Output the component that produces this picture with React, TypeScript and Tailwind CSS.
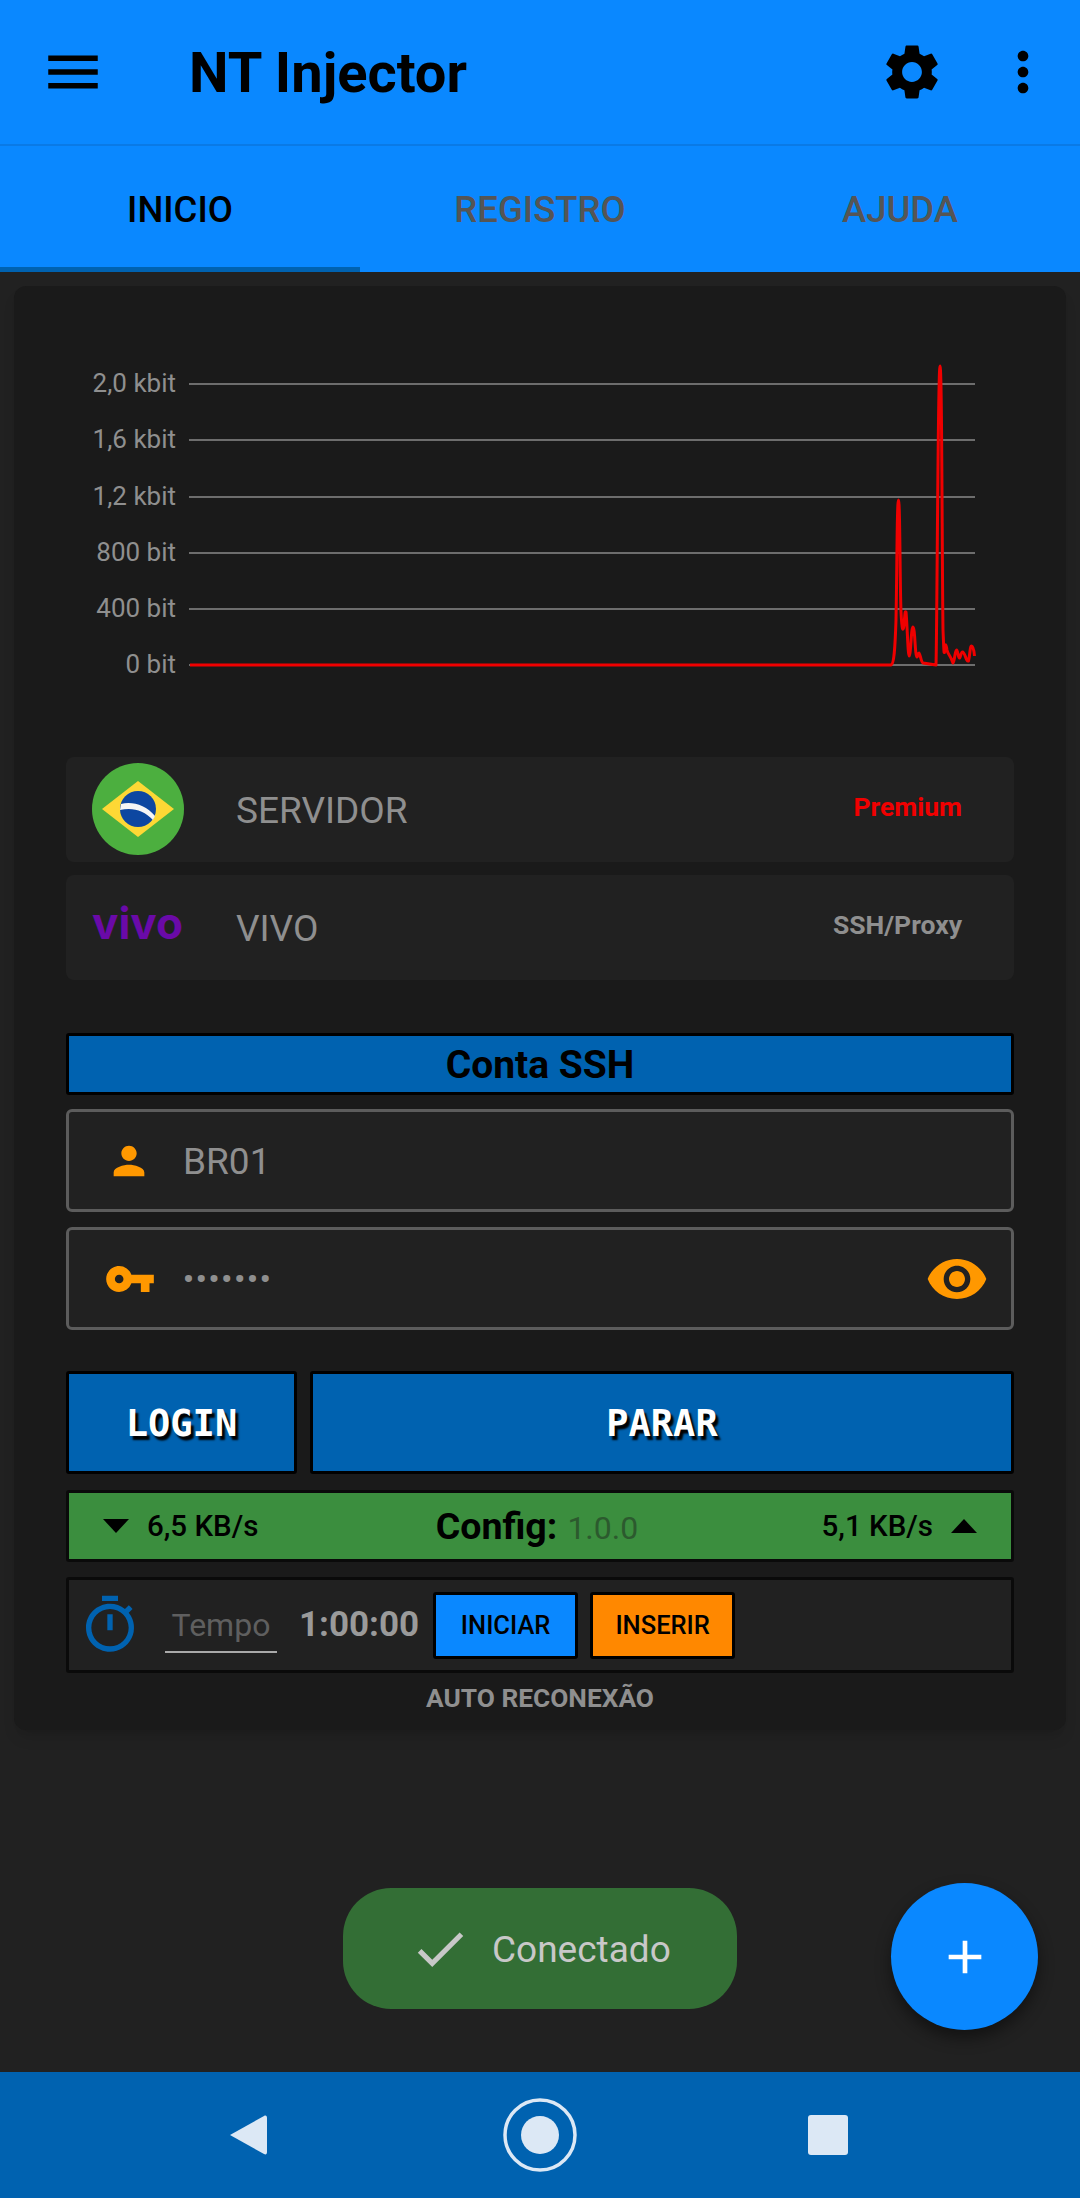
import { MdMenu, MdSettings, MdMoreVert, MdPerson, MdVpnKey, MdVisibility, MdOutlineTimer, MdCheck, MdAdd } from "react-icons/md";

const gridLines = [
  { y: 384, label: "2,0 kbit" },
  { y: 440, label: "1,6 kbit" },
  { y: 497, label: "1,2 kbit" },
  { y: 553, label: "800 bit" },
  { y: 609, label: "400 bit" },
  { y: 665, label: "0 bit" },
];

// traced from the reference, curves keep the spikes rounded
const tracePath =
  "M190 665 L891 665 C894 664 895 650 896 620 C897 570 897 500 898.5 500 C900 500 900 590 901 612 C902 632 903 632 904 625 C905 612 905 611 906 612 C907 620 908 656 909 656 C911 656 911 627 913 627 C915 627 915 657 917 657 C918 657 918 653 919 653 C920 653 921 662 923 663 L936 665 C937 640 938 366 940 366 C942 366 942 560 943 630 C944 655 944 655 945 650 C945.5 643 946 643 947 650 C948 655 950 654 953 663 C955 660 955 650 956.5 650 C958 650 958 658 959.5 658 C961 656 961 652 962.5 652 C965 652 966 662 968.5 661 C970 655 970 646 971.5 646 C973 646 974 650 974.5 656";

const Chart = () => (
  <svg viewBox="66 340 948 350" className="block w-[948px] h-[350px]">
    {gridLines.map((line) => (
      <g key={line.label}>
        <line x1="189" x2="975" y1={line.y} y2={line.y} stroke="#8a8a8a" strokeWidth="1.5" />
        <text x="176" y={line.y + 8} textAnchor="end" fill="#8f8f8f" fontSize="26" fontFamily="Roboto, sans-serif">
          {line.label}
        </text>
      </g>
    ))}
    <path d={tracePath} fill="none" stroke="#f00000" strokeWidth="3" strokeLinejoin="round" />
  </svg>
);

const BrazilFlag = () => (
  <svg viewBox="0 0 92 92" className="w-[92px] h-[92px] shrink-0 -mt-[2px]">
    <circle cx="46" cy="46" r="46" fill="#4caf3f" />
    <polygon points="46,18 82,46 46,74 10,46" fill="#fdd835" />
    <circle cx="46" cy="46" r="18" fill="#0d47a1" />
    <path d="M29 41 C40 38 54 42 63 53 L61 57 C52 47 40 44 28 47 Z" fill="#f5f5f5" />
  </svg>
);

const SelectRow = ({ logo, title, tag, tagClass }: { logo: React.ReactNode; title: string; tag: string; tagClass: string }) => (
  <div className="h-[105px] bg-[#212121] rounded-lg flex items-center">
    <div className="w-[170px] pl-[26px] shrink-0 flex items-center">{logo}</div>
    <span className="text-[37px] text-[#8f8f8f] mt-[3px]">{title}</span>
    <span className={`ml-auto mr-[52px] -mt-[5px] text-[26.5px] font-bold ${tagClass}`}>{tag}</span>
  </div>
);

const Triangle = ({ up }: { up?: boolean }) => (
  <svg viewBox="0 0 26 14" className="w-[26px] h-[14px] shrink-0">
    <polygon points={up ? "13,0 26,14 0,14" : "0,0 26,0 13,14"} fill="#000" />
  </svg>
);

export default function App() {
  return (
    <div className="w-[1080px] h-[2198px] relative flex flex-col bg-[#212121] overflow-hidden font-['Roboto',sans-serif]">
      <header className="h-[146px] bg-[#0a88ff] flex items-center shrink-0 border-b-2 border-[#0a7ae6]">
        <MdMenu className="w-[66px] h-[66px] ml-[40px] text-black" />
        <h1 className="ml-[83px] text-[56px] font-bold text-black pt-[2px]">NT Injector</h1>
        <MdSettings className="ml-auto w-[66px] h-[66px] text-black -translate-x-[1px]" />
        <MdMoreVert className="w-[64px] h-[64px] ml-[45px] mr-[25px] text-black" />
      </header>

      <nav className="h-[126px] bg-[#0a88ff] flex shrink-0">
        <div className="w-[360px] flex items-center justify-center text-[36.5px] font-medium text-black border-b-[5px] border-[#0062b0] pt-[7px]">INICIO</div>
        <div className="w-[360px] flex items-center justify-center text-[36.5px] font-medium text-[#555555] pt-[2px]">REGISTRO</div>
        <div className="w-[360px] flex items-center justify-center text-[36.5px] font-medium text-[#555555] pt-[2px]">AJUDA</div>
      </nav>

      <main className="flex-1">
        <section className="mx-[14px] mt-[14px] h-[1444px] bg-[#1a1a1a] rounded-xl px-[52px] pt-[54px] shadow-lg">
          <Chart />

          <div className="mt-[67px] flex flex-col gap-[13px]">
            <SelectRow logo={<BrazilFlag />} title="SERVIDOR" tag="Premium" tagClass="text-[#f00000]" />
            <SelectRow
              logo={<span className="text-[44px] leading-none font-bold text-[#6a0aa8] font-['Inter',sans-serif] -mt-[9px]">vivo</span>}
              title="VIVO"
              tag="SSH/Proxy"
              tagClass="text-[#8f8f8f]"
            />
          </div>

          <div className="mt-[53px] h-[62px] bg-[#0062b0] border-[3px] border-black rounded-[3px] flex items-center justify-center text-[39px] font-bold text-black pt-[2px]">
            Conta SSH
          </div>

          <div className="mt-[14px] h-[103px] bg-[#212121] border-[3px] border-[#5c5c5c] rounded-md flex items-center">
            <MdPerson className="w-[46px] h-[46px] ml-[37px] text-[#ff9800]" />
            <span className="ml-[31px] text-[37px] text-[#8f8f8f] mt-[3px]">BR01</span>
          </div>

          <div className="mt-[15px] h-[103px] bg-[#212121] border-[3px] border-[#5c5c5c] rounded-md flex items-center">
            <MdVpnKey className="w-[52px] h-[52px] ml-[35px] text-[#ff9800]" />
            <span className="ml-[27px] text-[30px] font-bold tracking-[2px] text-[#8f8f8f]">•••••••</span>
            <MdVisibility className="ml-auto mr-[22px] w-[64px] h-[64px] text-[#ff9800]" />
          </div>

          <div className="mt-[41px] h-[103px] flex gap-[13px]">
            <button className="w-[231px] bg-[#0062b0] border-[3px] border-black rounded-[3px] text-[37px] font-bold text-white font-['DejaVu_Sans_Mono',monospace] [text-shadow:3px_4px_2px_#000] pt-[2px]">
              LOGIN
            </button>
            <button className="flex-1 bg-[#0062b0] border-[3px] border-black rounded-[3px] text-[37px] font-bold text-white font-['DejaVu_Sans_Mono',monospace] [text-shadow:3px_4px_2px_#000] pt-[2px]">
              PARAR
            </button>
          </div>

          <div className="mt-[16px] h-[72px] bg-[#3b8e3e] border-[3px] border-[#0a0a0a] rounded-[3px] flex items-center px-[34px] relative">
            <Triangle />
            <span className="ml-[18px] text-[29.5px] font-medium text-black">6,5 KB/s</span>
            <div className="absolute left-0 right-[6px] flex justify-center items-baseline gap-[10px]">
              <span className="text-[37.5px] font-bold text-black">Config:</span>
              <span className="text-[32px] text-[#2c5a2e]">1.0.0</span>
            </div>
            <span className="ml-auto mr-[18px] text-[29.5px] font-medium text-black">5,1 KB/s</span>
            <Triangle up />
          </div>

          <div className="mt-[15px] h-[96px] bg-[#212121] border-[3px] border-[#0a0a0a] rounded-[3px] flex items-center">
            <MdOutlineTimer className="w-[64px] h-[64px] ml-[9px] text-[#0062b0]" />
            <div className="ml-[23px] w-[112px] h-[56px] border-b-[2px] border-[#aaaaaa] flex items-center justify-center text-[32px] text-[#5f5f5f] pt-[2px]">
              Tempo
            </div>
            <span className="ml-[22px] text-[35px] font-bold text-[#9a9a9a]">1:00:00</span>
            <button className="ml-[14px] w-[145px] h-[67px] bg-[#0a88ff] border-[3px] border-black rounded-[3px] text-[25.5px] font-medium text-black">INICIAR</button>
            <button className="ml-[12px] w-[145px] h-[67px] bg-[#ff8800] border-[3px] border-black rounded-[3px] text-[25.5px] font-medium text-black">INSERIR</button>
          </div>

          <p className="mt-[6px] text-center text-[26.3px] font-bold text-[#8f8f8f]">AUTO RECONEXÃO</p>
        </section>
      </main>

      <footer className="h-[126px] bg-[#0062b0] flex items-center shrink-0">
        <svg viewBox="0 0 40 44" className="w-[40px] h-[44px] ml-[228px]">
          <path d="M36 3 L2 22 L36 41 C38 42 39 41 39 39 L39 5 C39 3 38 2 36 3 Z" fill="#dce8f5" />
        </svg>
        <svg viewBox="0 0 74 74" className="w-[74px] h-[74px] ml-[235px]">
          <circle cx="37" cy="37" r="35" fill="none" stroke="#dce8f5" strokeWidth="3.5" />
          <circle cx="37" cy="37" r="19" fill="#dce8f5" />
        </svg>
        <div className="w-[40px] h-[40px] ml-[231px] bg-[#dce8f5] rounded-[3px]" />
      </footer>

      <div className="absolute left-[343px] top-[1888px] w-[394px] h-[121px] rounded-[48px] bg-[#336e35] flex items-center">
        <MdCheck className="w-[62px] h-[62px] ml-[66px] text-[#c8c8c8]" />
        <span className="ml-[21px] text-[37px] text-[#c8c8c8] mt-[3px]">Conectado</span>
      </div>

      <button className="absolute left-[891px] top-[1883px] w-[147px] h-[147px] rounded-full bg-[#0a88ff] flex items-center justify-center shadow-[0_8px_16px_rgba(0,0,0,0.45)]">
        <MdAdd className="w-[56px] h-[56px] text-white" />
      </button>
    </div>
  );
}
